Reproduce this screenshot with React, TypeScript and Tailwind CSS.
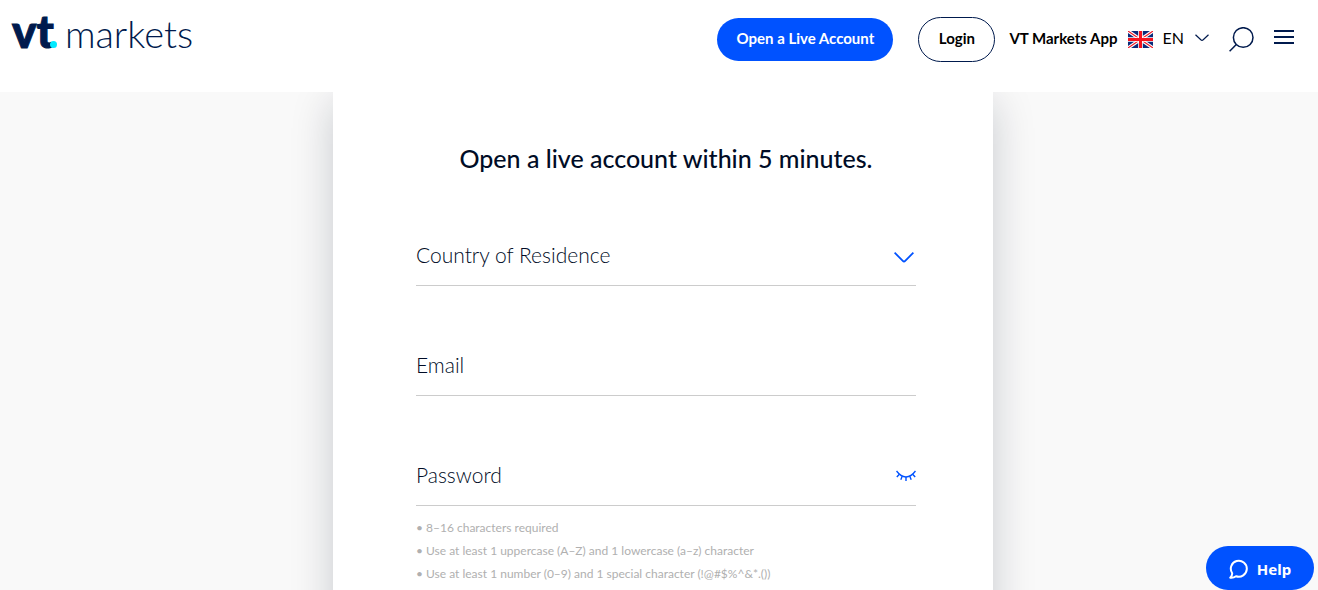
import { useState } from 'react';
import type { ReactNode } from 'react';

const countries = ['Australia', 'France', 'Germany', 'Singapore', 'United Kingdom'];

const passwordRules = [
  '8–16 characters required',
  'Use at least 1 uppercase (A–Z) and 1 lowercase (a–z) character',
  'Use at least 1 number (0–9) and 1 special character (!@#$%^&*.())',
];

function Logo() {
  return (
    <a href="#" className="flex items-baseline text-[#001a4d]" aria-label="VT Markets">
      <span className="text-[46px] leading-[56px] font-black [-webkit-text-stroke:1px_#001a4d]">vt</span>
      <span className="-ml-1 mr-2 size-[7px] rounded-full bg-[#00eaff]" />
      <span className="text-[38px] leading-[56px] font-light">markets</span>
    </a>
  );
}

function UkFlag() {
  return (
    <svg width="25" height="17" viewBox="0 0 25 17" aria-hidden="true">
      <rect width="25" height="17" fill="#0a2a7a" />
      <path d="M0 0L25 17M25 0L0 17" stroke="#fff" strokeWidth="3.4" />
      <path d="M0 0L25 17M25 0L0 17" stroke="#f01c28" strokeWidth="1.1" />
      <path d="M12.5 0V17M0 8.5H25" stroke="#fff" strokeWidth="4.6" />
      <path d="M12.5 0V17M0 8.5H25" stroke="#f5121e" strokeWidth="3" />
    </svg>
  );
}

function ClosedEye() {
  return (
    <svg width="20" height="12" viewBox="0 0 20 12" fill="none" stroke="#0052ff" strokeWidth="1.4" aria-hidden="true">
      <path d="M0.5 1C3.5 5 6.5 7 10 7S16.5 5 19.5 1" />
      <path d="M3.4 4.2L0.8 7M6.2 6.3L4.8 9.7M10 7V11M13.8 6.3L15.2 9.7M16.6 4.2L19.2 7" />
    </svg>
  );
}

function Header() {
  return (
    <header className="flex h-[92px] shrink-0 items-start justify-between bg-white pr-6 pl-3 text-black">
      <div className="pt-[3px]">
        <Logo />
      </div>

      <nav className="flex items-center pt-[17px]">
        <a
          href="#"
          className="flex h-[43px] w-44 items-center justify-center rounded-full bg-[#0052ff] pb-[2px] text-[15px] font-bold text-white"
        >
          Open a Live Account
        </a>
        <a
          href="#"
          className="ml-[25px] flex h-[45px] w-[77px] items-center justify-center rounded-full border border-[#001a4d] pb-[2px] text-[15px] font-bold"
        >
          Login
        </a>
        <a href="#" className="ml-[14px] pb-[2px] text-[15px] font-bold">
          VT Markets App
        </a>
        <button type="button" className="ml-[10px] flex items-center">
          <UkFlag />
          <span className="ml-[10px] pb-1 text-base">EN</span>
          <svg className="mb-1 ml-[11px]" width="14" height="8" viewBox="0 0 14 8" fill="none" stroke="#001a4d" strokeWidth="1.2" aria-hidden="true">
            <path d="M0.5 0.8L5.8 5.8Q7 6.8 8.2 5.8L13.5 0.8" />
          </svg>
        </button>
        <button type="button" className="ml-5" aria-label="Search">
          <svg width="25" height="25" viewBox="0 0 25 25" fill="none" stroke="#001a4d" strokeWidth="1.5" aria-hidden="true">
            <circle cx="14.2" cy="10.5" r="9.8" />
            <path d="M7.3 17.4L0.6 24.3" />
          </svg>
        </button>
        <button type="button" className="mb-[6px] ml-5" aria-label="Menu">
          <svg width="20" height="14" viewBox="0 0 20 14" aria-hidden="true">
            <path d="M0 0H20V2H0ZM0 6H20V8H0ZM0 12H20V14H0Z" fill="#001a4d" />
          </svg>
        </button>
      </nav>
    </header>
  );
}

interface FieldProps {
  id: string;
  label: string;
  children: ReactNode;
}

function Field({ id, label, children }: FieldProps) {
  return (
    <div className="flex h-[60px] items-center border-b border-[#cccccc] text-[21px] font-light text-[#000c26]">
      <label htmlFor={id} className="shrink-0 pb-[2px]">
        {label}
      </label>
      {children}
    </div>
  );
}

export default function App() {
  const [country, setCountry] = useState('');
  const [showPassword, setShowPassword] = useState(false);

  return (
    <div className="flex h-screen flex-col bg-white font-[Lato,sans-serif]">
      <Header />

      <main className="min-h-0 flex-1 overflow-x-hidden overflow-y-auto bg-[#f9f9f9] pl-2 [scrollbar-width:none]">
        <form className="mx-auto max-w-[660px] bg-white pt-[46px] pr-[77px] pb-24 pl-[83px] shadow-[0_10px_40px_rgba(0,20,40,0.2)]">
          <h1 className="text-center text-[25px] leading-10 font-medium text-[#000c26]">
            Open a live account within 5 minutes.
          </h1>

          <div className="mt-12 flex flex-col gap-[50px]">
            <Field id="country" label="Country of Residence">
              <select
                id="country"
                value={country}
                onChange={(e) => setCountry(e.target.value)}
                className="min-w-0 flex-1 appearance-none px-3 outline-none"
              >
                <option value="" />
                {countries.map((name) => (
                  <option key={name}>{name}</option>
                ))}
              </select>
              <svg className="mt-1 mr-[2px]" width="20" height="11" viewBox="0 0 20 11" fill="none" stroke="#0052ff" strokeWidth="1.8" aria-hidden="true">
                <path d="M0.6 0.7L8.8 8.9Q10 10.1 11.2 8.9L19.4 0.7" />
              </svg>
            </Field>

            <Field id="email" label="Email">
              <input id="email" type="email" className="min-w-0 flex-1 px-3 outline-none" />
            </Field>

            <Field id="password" label="Password">
              <input
                id="password"
                type={showPassword ? 'text' : 'password'}
                className="min-w-0 flex-1 px-3 outline-none"
              />
              <button type="button" aria-label="Show password" onClick={() => setShowPassword(!showPassword)}>
                <ClosedEye />
              </button>
            </Field>
          </div>

          <ul className="mt-[10px] text-xs leading-[23px] text-[#b0b0b0]">
            {passwordRules.map((rule) => (
              <li key={rule}>• {rule}</li>
            ))}
          </ul>
        </form>
      </main>

      <button
        type="button"
        className="fixed right-1 bottom-0 flex h-11 w-[108px] items-center justify-center gap-2 rounded-full bg-[#0052ff] pt-[2px] font-['Noto_Sans',sans-serif] text-[15px] font-bold text-white"
      >
        <svg width="20" height="20" viewBox="0 0 20 20" fill="none" stroke="currentColor" strokeWidth="2" strokeLinejoin="round" aria-hidden="true">
          <path d="M3.2 14.2A8 8 0 1 1 7 17.2C5.200 18.600 3 19 1.200 18.700C2.600 17.500 3.300 16 3.200 14.200Z" />
        </svg>
        Help
      </button>
    </div>
  );
}
